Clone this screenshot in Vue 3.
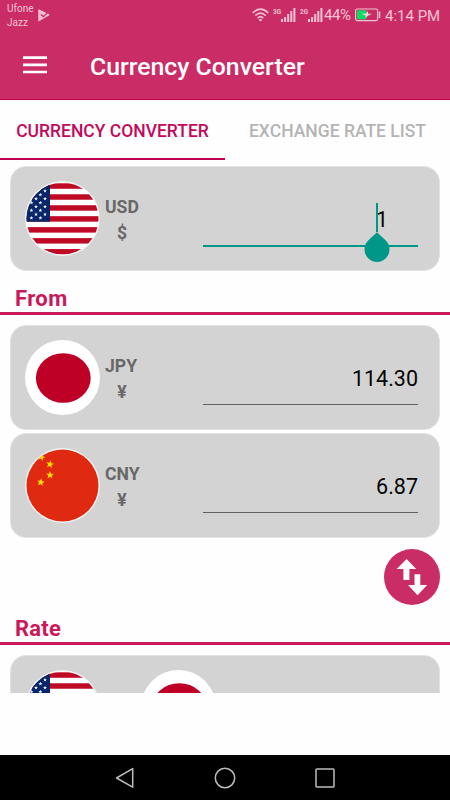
<script setup>
const stripes = [0, 2, 4, 6, 8, 10, 12]
const stars = [
  [6.4, 21.7], [6.4, 29.4], [6.4, 37], [11, 17.7], [11, 25.6], [11, 33.3],
  [15.4, 13.7], [15.4, 21.7], [15.4, 29.4], [15.4, 37],
  [20, 9.8], [20, 17.7], [20, 25.6], [20, 33.3],
]
const signalBars = [3, 5, 8, 11, 14]
const cards = [
  { code: 'USD', symbol: '$', value: '1', flag: 'us', active: true },
  { code: 'JPY', symbol: '¥', value: '114.30', flag: 'jp' },
  { code: 'CNY', symbol: '¥', value: '6.87', flag: 'cn' },
]
const starPath = 'M0-3.5L.9-1.1 3.4-1.1 1.4.5 2.1 3 0 1.5-2.1 3-1.4.5-3.4-1.1-.9-1.1Z'
const chinaStars = [[16.5, 9, 20], [25, 16.2, 12], [25, 27, 0], [15.8, 34.3, 10]]
</script>

<template>
  <div class="screen">
    <svg class="defs" width="0" height="0">
      <defs>
        <clipPath id="disc"><circle cx="37.5" cy="37.5" r="36" /></clipPath>
        <symbol id="us" viewBox="0 0 75 75">
          <circle cx="37.5" cy="37.5" r="37.4" fill="#f5f5f5" />
          <g clip-path="url(#disc)">
            <rect width="75" height="75" fill="#fff" />
            <rect v-for="s in stripes" :key="s" x="0" :y="2.3 + s * 5.48" width="75" height="5.48" fill="#bf0a26" />
            <rect width="25" height="38.4" y="2.3" fill="#062669" />
            <path v-for="(s, i) in stars" :key="i" :d="starPath" fill="#f4f6fb" :transform="`translate(${s[0]} ${s[1]}) scale(.58)`" />
          </g>
        </symbol>
        <symbol id="jp" viewBox="0 0 75 75">
          <circle cx="37.5" cy="37.5" r="37.5" fill="#fff" />
          <ellipse cx="38.3" cy="38" rx="27.4" ry="24.8" fill="#be0026" />
        </symbol>
        <symbol id="cn" viewBox="0 0 75 75">
          <circle cx="37.5" cy="37.5" r="37.4" fill="#f5f5f5" />
          <circle cx="37.5" cy="37.5" r="36" fill="#df2910" />
          <g clip-path="url(#disc)">
            <path v-for="(s, i) in chinaStars" :key="i" :d="starPath" fill="#ffde00" :transform="`translate(${s[0]} ${s[1]}) rotate(${s[2]}) scale(1.15)`" />
          </g>
        </symbol>
      </defs>
    </svg>

    <header class="top">
      <div class="status">
        <div class="carrier"><span>Ufone</span><span>Jazz</span></div>
        <svg class="play" width="12" height="13" viewBox="0 0 12 13">
          <path d="M1.2.6Q.2.2.2 1.3L.3 11.7Q.3 12.8 1.4 12.1L11 6.6Q12 5.8 11 5.1L6.6 2.9 1.2.6Z" fill="#f3bdd1" />
          <path d="M2.9 5.4L5.4 7.6 9.6 3.6" fill="none" stroke="#ca2c66" stroke-width="1.3" />
        </svg>
        <div class="indicators">
          <svg width="17" height="14" viewBox="0 0 17 14" fill="none" stroke="#f4c3d4" stroke-width="1.6">
            <path d="M.7 5Q8.5-2.8 16.3 5M3.2 7.7Q8.5 2.4 13.8 7.7M5.7 10.1Q8.5 7.3 11.3 10.1" />
            <circle cx="8.5" cy="12" r="1.3" fill="#f4c3d4" stroke="none" />
          </svg>
          <div class="signal" v-for="g in ['3G', '2G']" :key="g">
            <span><em>{{ g }}</em></span>
            <svg width="15" height="14" viewBox="0 0 15 14">
              <rect v-for="(h, i) in signalBars" :key="h" :x="i * 3.1" :y="14 - h" width="2" :height="h" fill="#f4c3d4" />
            </svg>
          </div>
          <span class="percent">44%</span>
          <svg class="battery" width="26" height="14" viewBox="0 0 26 14">
            <rect x=".6" y="1" width="22" height="11.6" rx="1.5" fill="none" stroke="#f4c3d4" stroke-width="1.1" />
            <rect x="2" y="2.3" width="9.3" height="9" fill="#08dc61" />
            <path d="M24.5 3.5V10" stroke="#f4c3d4" stroke-width="1.5" />
            <path d="M6 5.8H10.5L13 3.1V5.8H17L12.5 8.1 10.7 10.3V7.6Z" fill="#f9d9e4" />
          </svg>
          <span class="time">4:14 PM</span>
        </div>
      </div>
      <div class="toolbar">
        <svg width="24" height="18" viewBox="0 0 24 18">
          <path d="M0 1.6H24M0 8.8H24M0 16H24" stroke="#fff" stroke-width="2.7" />
        </svg>
        <h1>Currency Converter</h1>
      </div>
    </header>

    <nav class="tabs">
      <button class="tab selected"><span>CURRENCY CONVERTER</span></button>
      <button class="tab"><span>EXCHANGE RATE LIST</span></button>
    </nav>

    <main class="content">
      <template v-for="(card, i) in cards" :key="card.code">
        <h2 v-if="i === 1" class="section from">From</h2>
        <section class="card" :class="{ active: card.active }">
          <svg class="flag" width="75" height="75"><use :href="'#' + card.flag" /></svg>
          <div class="currency"><b>{{ card.code }}</b><b class="symbol">{{ card.symbol }}</b></div>
          <div class="amount">
            <span>{{ card.value }}</span>
            <i v-if="card.active" class="caret"></i>
            <svg v-if="card.active" class="handle" width="26" height="30" viewBox="0 0 26 30">
              <path d="M13 .3L21.8 8.5A12.5 12.5 0 1 1 4.2 8.5Z" fill="#009688" />
            </svg>
          </div>
        </section>
      </template>
      <div class="actions">
        <button class="swap">
          <svg width="56" height="56" viewBox="0 0 56 56">
            <path d="M22.6 10L32.2 20H25.4V31H19.4V20H12.7ZM30.5 25.3H36.3V36H43.2L33.6 46.3 24 36H30.5Z" fill="#fff" />
          </svg>
        </button>
      </div>
      <h2 class="section rate">Rate</h2>
      <section class="card pair">
        <svg class="flag" width="75" height="75"><use href="#us" /></svg>
        <svg class="flag" width="75" height="75"><use href="#jp" /></svg>
      </section>
    </main>

    <footer class="navbar">
      <svg width="20" height="22" viewBox="0 0 20 22"><path d="M17.7 1.6V20.2L1.5 11Z" /></svg>
      <svg width="22" height="22" viewBox="0 0 22 22"><circle cx="11" cy="11" r="9.7" /></svg>
      <svg width="20" height="20" viewBox="0 0 20 20"><rect x="1" y="1" width="18" height="18" rx=".8" /></svg>
    </footer>
  </div>
</template>

<style>
body { margin: 0; background: #fefefe; }
</style>

<style scoped>
.screen { width: 450px; height: 800px; display: flex; flex-direction: column; overflow: hidden; background: #fefefe; font-family: Roboto, "Noto Sans", sans-serif; }
.defs { position: absolute; }
svg { display: block; flex: none; }
button { border: 0; padding: 0; background: none; font: inherit; }
h1, h2 { margin: 0; }
.top { height: 100px; box-sizing: border-box; background: #ca2c66; border-bottom: 1px solid #c00048; flex: none; }
.status { height: 32px; display: flex; color: #f4c3d4; padding: 0 10px 0 7px; }
.carrier { display: flex; flex-direction: column; font-size: 10px; line-height: 14px; padding-top: 2px; width: 31px; }
.play { margin-top: 9px; }
.indicators { display: flex; align-items: flex-start; margin-left: auto; padding-top: 8px; }
.signal { display: flex; margin-left: 4px; }
.signal span { width: 8px; }
.signal em { display: block; font-style: normal; font-size: 8px; line-height: 7px; font-weight: 700; transform: scaleX(.8); transform-origin: 0 0; }
.percent { font-size: 15px; line-height: 14px; margin-left: 1px; width: 31px; white-space: nowrap; letter-spacing: -.4px; }
.time { font-size: 15px; line-height: 16px; margin-left: 4px; width: 55px; white-space: nowrap; }
.toolbar { height: 67px; display: flex; align-items: center; padding: 0 0 0 23px; gap: 43px; box-sizing: border-box; }
.toolbar svg { margin-top: -2px; }
h1 { color: #fff; font-weight: 500; font-size: 24.8px; line-height: 30px; padding-top: 2px; }
.tabs { height: 60px; display: flex; flex: none; }
.tab { width: 225px; color: #b4b4b4; font-size: 17.5px; font-weight: 500; box-sizing: border-box; padding-top: 4px; border-bottom: 2.5px solid transparent; white-space: nowrap; }
.selected { color: #c2095a; border-color: #c00053; }
.content { height: 532.5px; overflow: hidden; flex: none; box-sizing: border-box; padding-top: 6px; }
.card { height: 105px; width: 430px; box-sizing: border-box; margin: 0 10px 3px; border: 1px solid #e2e2e2; border-radius: 16px; background: #d3d3d3; padding: 14px 21px 14px 14px; display: flex; }
.currency { width: 34px; margin-left: 5px; padding-top: 15px; display: flex; flex-direction: column; color: #686868; font-size: 17.6px; line-height: 22px; }
.currency b { white-space: nowrap; }
.symbol { align-self: center; margin-top: 4px; }
.amount { position: relative; width: 215px; height: 65px; margin-left: auto; box-sizing: border-box; border-bottom: 1px solid #606060; display: flex; justify-content: flex-end; padding-top: 26px; font-size: 21.5px; line-height: 26px; color: #050505; }
.active .amount { border-bottom: 2.5px solid #009688; height: 66px; padding-right: 30px; }
.caret { position: absolute; width: 2px; height: 29px; right: 40px; top: 22px; background: #009688; }
.handle { position: absolute; right: 28px; top: 51px; }
.section { height: 41px; box-sizing: border-box; padding-left: 15px; margin-bottom: 10px; border-bottom: 3px solid #c9195b; color: #c9195b; font-size: 22px; line-height: 28px; font-weight: 700; }
.from { padding-top: 11px; letter-spacing: .4px; }
.actions { display: flex; justify-content: flex-end; padding: 8px 10px 0 0; }
.swap { width: 56px; height: 56px; border-radius: 50%; background: #ca2c66; }
.rate { height: 40px; padding-top: 10px; letter-spacing: .2px; }
.pair { gap: 41px; height: 120px; }
.navbar { height: 45px; margin-top: auto; background: #000; display: flex; align-items: center; justify-content: center; gap: 79px; flex: none; }
.navbar svg { fill: none; stroke: #bcbcbc; stroke-width: 1.5; stroke-linejoin: round; }
</style>
